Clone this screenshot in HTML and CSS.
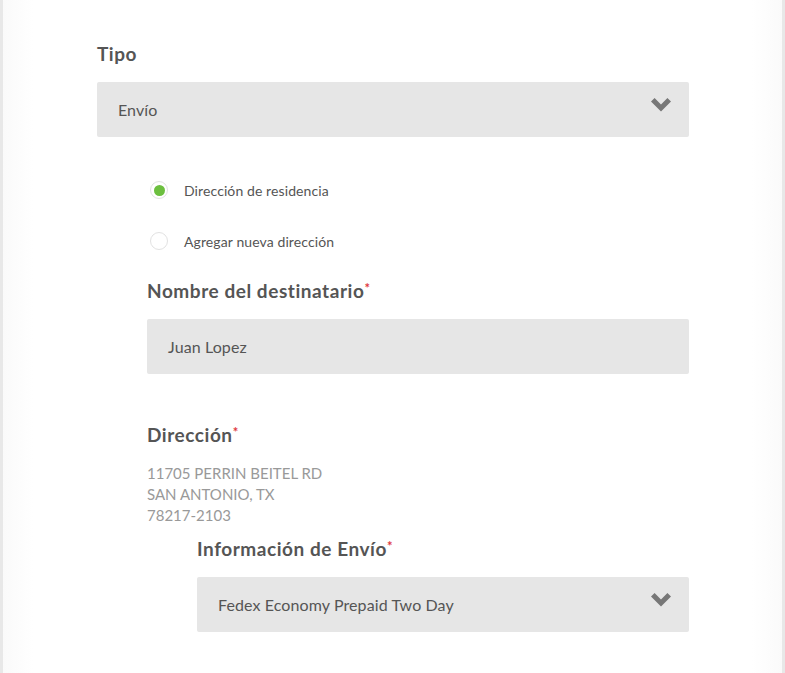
FILE: index.html
```html
<!DOCTYPE html>
<html lang="es">
<head>
    <meta charset="UTF-8">
    <meta name="viewport" content="width=device-width, initial-scale=1.0">
    <title>Envío</title>
    <link rel="stylesheet" href="styles.css">
</head>
<body>
    <div class="pagina">
        <div class="formulario">
            <div class="campo">
                <label class="etiqueta">Tipo</label>
                <div class="selector">
                    <span>Envío</span>
                    <svg class="flecha" viewBox="0 0 20 14" width="20" height="14">
                        <path d="M0 3.6 L3.6 0 L10 6.4 L16.4 0 L20 3.6 L10 13.6 Z" fill="#777"/>
                    </svg>
                </div>
            </div>

            <div class="bloque">
                <div class="opciones">
                    <div class="opcion">
                        <span class="radio activo"></span>
                        <span>Dirección de residencia</span>
                    </div>
                    <div class="opcion">
                        <span class="radio"></span>
                        <span>Agregar nueva dirección</span>
                    </div>
                </div>

                <div class="campo">
                    <label class="etiqueta">Nombre del destinatario<span class="requerido">*</span></label>
                    <div class="entrada">Juan Lopez</div>
                </div>

                <div class="campo direccion">
                    <label class="etiqueta">Dirección<span class="requerido">*</span></label>
                    <div class="texto-direccion">
                        11705 PERRIN BEITEL RD<br>
                        SAN ANTONIO, TX<br>
                        78217-2103
                    </div>
                </div>

                <div class="campo envio">
                    <label class="etiqueta">Información de Envío<span class="requerido">*</span></label>
                    <div class="selector">
                        <span>Fedex Economy Prepaid Two Day</span>
                        <svg class="flecha" viewBox="0 0 20 14" width="20" height="14">
                            <path d="M0 3.6 L3.6 0 L10 6.4 L16.4 0 L20 3.6 L10 13.6 Z" fill="#777"/>
                        </svg>
                    </div>
                </div>
            </div>
        </div>
    </div>
</body>
</html>
```

FILE: styles.css
```css
* {
    box-sizing: border-box;
}
body {
    margin: 0;
    background-color: #fff;
    font-family: Lato, "Open Sans", sans-serif;
    color: #555;
}
.pagina {
    min-height: 673px;
    border-left: 3px solid #e8e8e8;
    border-right: 3px solid #e8e8e8;
    background: linear-gradient(to right, #fafafa 0, #fff 30px, #fff calc(100% - 30px), #fafafa 100%);
}
.formulario {
    padding: 42px 93px 0 94px;
}
.etiqueta {
    display: block;
    font-size: 19px;
    font-weight: 700;
    letter-spacing: 0.55px;
    color: #555;
    line-height: 24px;
    margin-bottom: 16px;
}
.requerido {
    color: #e0393e;
    font-size: 13px;
    vertical-align: top;
    line-height: 18px;
    letter-spacing: 0;
}
.selector,
.entrada {
    display: flex;
    align-items: center;
    justify-content: space-between;
    height: 55px;
    padding: 0 18px 0 21px;
    background-color: #e6e6e6;
    border-radius: 2px;
    font-size: 16px;
    letter-spacing: 0.1px;
    color: #555;
}
.flecha {
    margin-top: -9px;
}
.bloque {
    padding-left: 50px;
}
.opciones {
    padding: 44px 0 29px 3px;
}
.opcion {
    display: flex;
    align-items: center;
    gap: 16px;
    height: 18px;
    margin-bottom: 33px;
    font-size: 14px;
    letter-spacing: 0.1px;
    color: #555;
}
.opcion:last-child {
    margin-bottom: 0;
}
.radio {
    width: 18px;
    height: 18px;
    border: 1px solid #e2e2e2;
    border-radius: 50%;
    display: flex;
    align-items: center;
    justify-content: center;
}
.radio.activo::after {
    content: "";
    width: 11px;
    height: 11px;
    border-radius: 50%;
    background-color: #6cbf3f;
}
.direccion {
    margin-top: 49px;
}
.texto-direccion {
    font-size: 15px;
    line-height: 21px;
    color: #999;
}
.envio {
    margin-top: 11px;
    padding-left: 50px;
}
```
